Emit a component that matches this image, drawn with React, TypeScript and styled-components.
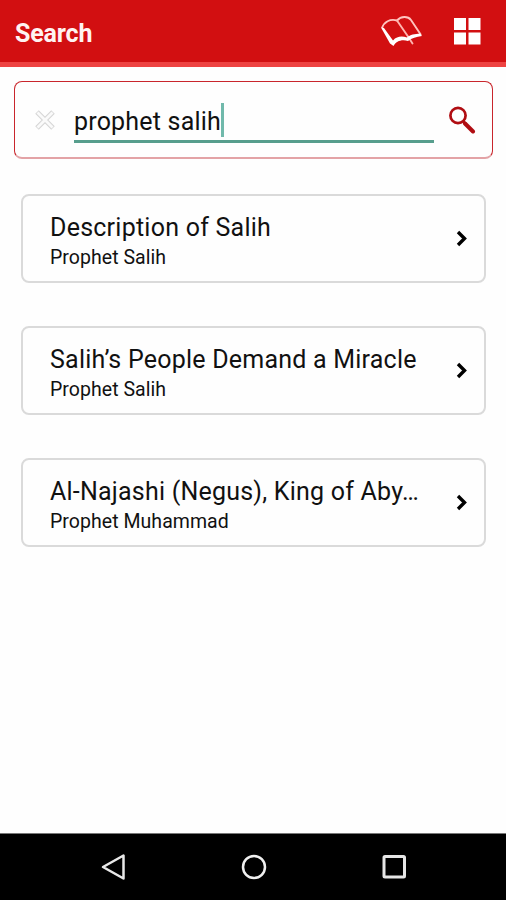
import React from 'react';
import styled, { createGlobalStyle } from 'styled-components';

const GlobalStyle = createGlobalStyle`
  * { box-sizing: border-box; }
  body { margin: 0; background: #fefefe; font-family: Roboto, "Liberation Sans", sans-serif; }
`;

const Screen = styled.div`
  display: flex;
  flex-direction: column;
  height: 900px;
  width: 506px;
  background: #fefefe;
  overflow: hidden;
`;

const Header = styled.header`
  display: flex;
  align-items: center;
  height: 67px;
  padding: 0 25px 0 15px;
  background: #d20f11;
  border-bottom: 5px solid #ee4342;
`;

const HeaderTitle = styled.h1`
  margin: 5px auto 0 0;
  font-size: 25px;
  line-height: 30px;
  font-weight: 700;
  letter-spacing: -0.15px;
  color: #fff3f2;
`;

const HeaderActions = styled.div`
  display: flex;
  align-items: center;
  gap: 29px;
  svg { display: block; }
`;

const SearchBox = styled.div`
  display: flex;
  align-items: flex-start;
  flex: none;
  height: 78px;
  margin: 14px 13px 0 14px;
  padding: 20px 14px 0 20px;
  border: 1px solid #c9262c;
  border-bottom: 2px solid #e3a3a6;
  border-radius: 8px;
`;

const ClearIcon = styled.svg`
  flex: none;
  margin: 8px 19px 0 0;
`;

const Field = styled.div`
  display: flex;
  align-items: flex-start;
  width: 360px;
  height: 41px;
  border-bottom: 3px solid #579e8d;
  font-size: 25px;
  line-height: 40px;
  letter-spacing: 0.2px;
  color: #111;
`;

const Caret = styled.span`
  width: 3px;
  height: 34px;
  margin-top: 1px;
  background: #70b9ab;
`;

const SearchIcon = styled.svg`
  flex: none;
  margin: 4px 0 0 14px;
`;

const Results = styled.main`
  display: flex;
  flex-direction: column;
  flex: 1;
  gap: 43px;
  padding: 35px 20px 0 21px;
`;

const Card = styled.article`
  display: flex;
  align-items: center;
  justify-content: space-between;
  height: 89px;
  padding: 0 16px 0 27px;
  border: 2px solid #dadada;
  border-radius: 8px;
`;

const CardText = styled.div`
  width: 370px;
  padding-top: 6px;
`;

const Title = styled.h2<{ $spacing: number }>`
  margin: 0;
  font-size: 25px;
  line-height: 32px;
  font-weight: 400;
  letter-spacing: ${(p) => p.$spacing}px;
  white-space: nowrap;
  color: #111;
`;

const Subtitle = styled.p`
  margin: 0;
  font-size: 19.5px;
  line-height: 28px;
  letter-spacing: 0.05px;
  color: #111;
`;

const NavBar = styled.nav`
  display: flex;
  flex: none;
  align-items: center;
  justify-content: space-between;
  height: 67px;
  padding: 0 98px 0 100px;
  border-top: 1px solid #777;
  background: #000;
`;

const BookIcon = () => (
  <svg width="44" height="34" viewBox="0 0 44 34" fill="none">
    <path d="M2 14C4 8 10 4.500 17 6.500C21 2 28 2 31 6L41 21" stroke="#ffc4bf" strokeWidth="1.900" strokeLinejoin="round" />
    <path d="M17 6.500L28 22.500L32.500 29.500" stroke="#ffb5b0" strokeWidth="1.900" strokeLinecap="round" />
    <path d="M1 13.500L4 14L13 26.500C17 22 22 22 27 23.500C30 20.500 35 20 40 19.500L42 22C36 23 32 24 28 27C22 25 16 27 13.500 32L10 29.500Z" fill="#fff" />
  </svg>
);

const GridIcon = () => (
  <svg width="28" height="28" viewBox="0 0 28 28" fill="#fff">
    <path d="M1 1h12v12H1zM15.500 1h12v12h-12zM1 15.500h12v12H1zM15.500 15.500h12v12h-12z" />
  </svg>
);

const Chevron = () => (
  <svg width="12" height="18" viewBox="0 0 12 18" fill="none" stroke="#000" strokeWidth="3.400">
    <path d="M2 2L8.500 8.500L2 15" />
  </svg>
);

const results = [
  { title: 'Description of Salih', subtitle: 'Prophet Salih', spacing: 0.24 },
  { title: 'Salih’s People Demand a Miracle', subtitle: 'Prophet Salih', spacing: 0.22 },
  { title: 'Al-Najashi (Negus), King of Aby…', subtitle: 'Prophet Muhammad', spacing: 0.22 },
];

export default function App() {
  return (
    <Screen>
      <GlobalStyle />
      <Header>
        <HeaderTitle>Search</HeaderTitle>
        <HeaderActions>
          <BookIcon />
          <GridIcon />
        </HeaderActions>
      </Header>
      <SearchBox>
        <ClearIcon width="20" height="20" viewBox="0 0 20 20" fill="none">
          <path d="M2 2L18 18M18 2L2 18" stroke="#d6d6d6" strokeWidth="5" />
          <path d="M2.500 2.500L17.500 17.500M17.500 2.500L2.500 17.500" stroke="#fafafa" strokeWidth="2.800" />
        </ClearIcon>
        <Field>
          <span>prophet salih</span>
          <Caret />
        </Field>
        <SearchIcon width="28" height="28" viewBox="0 0 28 28" fill="none" stroke="#b00d12">
          <circle cx="10" cy="9.500" r="7.600" strokeWidth="2.700" />
          <path d="M15 15L18 18.500" strokeWidth="3" />
          <path d="M17 17.500L25 25.500" strokeWidth="4" strokeLinecap="round" />
        </SearchIcon>
      </SearchBox>
      <Results>
        {results.map((r) => (
          <Card key={r.title}>
            <CardText>
              <Title $spacing={r.spacing}>{r.title}</Title>
              <Subtitle>{r.subtitle}</Subtitle>
            </CardText>
            <Chevron />
          </Card>
        ))}
      </Results>
      <NavBar>
        <svg width="28" height="30" viewBox="0 0 28 30" fill="none" stroke="#e8e8e8" strokeWidth="2.500">
          <path d="M3 15L23.500 3.500V26.500Z" strokeLinejoin="round" />
        </svg>
        <svg width="28" height="28" viewBox="0 0 28 28" fill="none" stroke="#f0f0f0" strokeWidth="2.500">
          <circle cx="14" cy="14" r="11" />
        </svg>
        <svg width="28" height="28" viewBox="0 0 28 28" fill="none" stroke="#e6e6e6" strokeWidth="3">
          <rect x="4" y="3.500" width="20.500" height="20.500" rx="1" />
        </svg>
      </NavBar>
    </Screen>
  );
}
